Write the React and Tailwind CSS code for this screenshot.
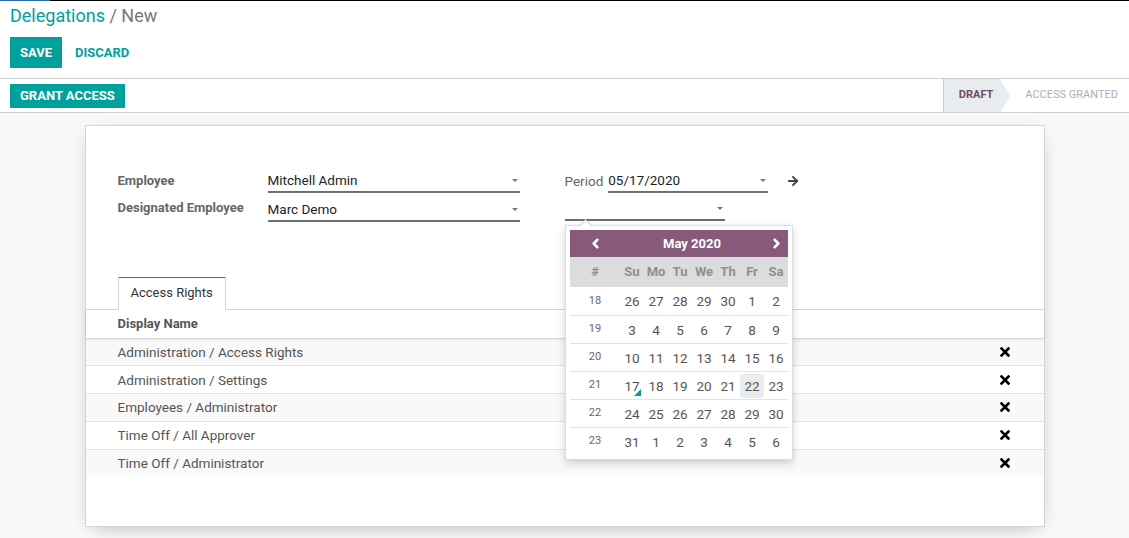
import { ArrowRight, ChevronLeft, ChevronRight } from 'lucide-react'

const font = { fontFamily: 'Roboto, "Noto Sans", sans-serif' }

const rights = [
    'Administration / Access Rights',
    'Administration / Settings',
    'Employees / Administrator',
    'Time Off / All Approver',
    'Time Off / Administrator',
]

const weeks = [
    [18, [26, 27, 28, 29, 30, 1, 2]],
    [19, [3, 4, 5, 6, 7, 8, 9]],
    [20, [10, 11, 12, 13, 14, 15, 16]],
    [21, [17, 18, 19, 20, 21, 22, 23]],
    [22, [24, 25, 26, 27, 28, 29, 30]],
    [23, [31, 1, 2, 3, 4, 5, 6]],
]

const Caret = () => (
    <div className="w-0 h-0 border-l-[3px] border-r-[3px] border-t-[3px] border-l-transparent border-r-transparent border-t-[#777]" />
)

const Field = ({ value, className }) => (
    <div className={"flex items-center justify-between h-[23px] border-b-2 border-[#6f6f6f] pr-[2px] text-[13.5px] text-[#212529] " + className}>
        <span>{value}</span>
        <Caret />
    </div>
)

const Times = () => (
    <svg width="10" height="10" viewBox="0 0 10 10">
        <path d="M1.5 1.5 L8.5 8.5 M8.5 1.5 L1.5 8.5" stroke="#000" strokeWidth="2.6" strokeLinecap="square" />
    </svg>
)

const Calendar = () => (
    <div className="absolute left-[565px] top-[225px] w-[228px] bg-white border border-[#dcdcdc] shadow-[0_3px_8px_rgba(0,0,0,0.18)] p-[4px]">
        <div className="absolute -top-[5px] left-[15px] w-[9px] h-[9px] rotate-45 bg-white border-l border-t border-[#ccc]" />
        <div className="relative grid grid-cols-[50px_repeat(7,1fr)] items-center h-[27px] bg-[#875a7b] text-white">
            <div className="flex justify-center"><ChevronLeft size={15} strokeWidth={4} /></div>
            <span className="col-span-6 text-center font-bold text-[13px]">May 2020</span>
            <div className="flex justify-center"><ChevronRight size={15} strokeWidth={4} /></div>
        </div>
        <div className="grid grid-cols-[50px_repeat(7,1fr)] h-[30px] items-center bg-[#dcdcdc] text-[#8f8f8f] font-bold text-[13px] text-center">
            <span>#</span>
            {['Su', 'Mo', 'Tu', 'We', 'Th', 'Fr', 'Sa'].map(d => <span key={d}>{d}</span>)}
        </div>
        {weeks.map(([w, days], i) => (
            <div key={w} className={"grid grid-cols-[50px_repeat(7,1fr)] h-[28px] items-center text-center " + (i > 0 ? 'border-t border-[#e2e2e2]' : '')}>
                <span className="text-[11px] text-[#666]">{w}</span>
                {days.map((d, j) => {
                    const today = w === 21 && j === 0
                    const active = w === 21 && j === 5
                    return (
                        <span key={j} className={"relative text-[13.5px] text-[#555] leading-[24px] " + (active ? 'bg-[#e9ecef] rounded-sm' : '')}>
                            {d}
                            {today && <span className="absolute right-[3px] bottom-[2px] w-0 h-0 border-l-[7px] border-l-transparent border-b-[7px] border-b-[#00a09d]" />}
                        </span>
                    )
                })}
            </div>
        ))}
    </div>
)

export default function App() {
    return (
        <div className="relative min-h-[538px] bg-[#f9f9f9] text-[13px]" style={font}>
            <div className="bg-white">
                <div className="flex h-px bg-black">
                    <div className="w-[50px] bg-[#2a6fb5]" />
                </div>
                <div className="px-[10px] pt-[4px] border-b border-[#cfcfcf]">
                    <div className="text-[18px] leading-[22px]">
                        <span className="text-[#00a09d]">Delegations</span>
                        <span className="text-[#777]"> / New</span>
                    </div>
                    <div className="flex items-center gap-[13px] mt-[10px] pb-[10px]">
                        <button className="h-[31px] px-[10px] bg-[#00a09d] text-white font-bold text-[13px]">SAVE</button>
                        <button className="font-bold text-[13px] text-[#00a09d]">DISCARD</button>
                    </div>
                </div>
                <div className="flex items-center justify-between h-[34px] border-b border-[#cfcfcf] pl-[10px]">
                    <button className="h-[24px] px-[10px] bg-[#00a09d] text-white font-bold text-[13px]">GRANT ACCESS</button>
                    <div className="flex h-full items-stretch text-[11px] uppercase">
                        <div className="relative flex items-center pl-[15px] pr-[7px] bg-[#e9ecef] border-l border-[#cfcfcf] font-bold text-[#6d4b65]">
                            DRAFT
                            <div className="absolute -right-[10px] top-0 w-0 h-0 border-t-[17px] border-b-[17px] border-l-[10px] border-t-transparent border-b-transparent border-l-[#e9ecef]" />
                        </div>
                        <div className="flex items-center pl-[25px] pr-[11px] text-[#aab0b6]">ACCESS GRANTED</div>
                    </div>
                </div>
            </div>

            <div className="mx-auto mt-[12px] w-[960px] h-[402px] bg-white border border-[#d4d4d4] shadow-[0_5px_20px_-8px_rgba(0,0,0,0.35)] px-[32px] pt-[44px]">
                <div className="flex">
                    <div className="w-[447px] flex flex-col gap-[5px]">
                        <div className="flex items-end">
                            <div className="w-[150px] font-bold text-[#666] pb-[3px]">Employee</div>
                            <Field value="Mitchell Admin" className="w-[252px]" />
                        </div>
                        <div className="flex items-end">
                            <div className="w-[150px] font-bold text-[#666] pb-[4px]">Designated Employee</div>
                            <Field value="Marc Demo" className="w-[252px]" />
                        </div>
                    </div>
                    <div className="flex flex-col gap-[5px]">
                        <div className="flex items-end">
                            <span className="text-[#666] text-[13.5px] pb-[2px] pr-[5px]">Period</span>
                            <Field value="05/17/2020" className="w-[160px]" />
                            <ArrowRight size={14} strokeWidth={3.4} className="ml-[18px] mb-[5px] text-[#444]" />
                        </div>
                        <Field value="" className="w-[160px]" />
                    </div>
                </div>

                <div className="-mx-[32px] mt-[55px]">
                    <div className="flex border-b border-[#d4d4d4] pl-[32px]">
                        <div className="h-[33px] -mb-px px-[12px] flex items-center bg-white border border-[#d4d4d4] border-t-[#7c5a72] border-b-white text-[13px] text-[#333]">Access Rights</div>
                    </div>
                    <div className="h-[28px] flex items-center pl-[32px] font-bold text-[#555] shadow-[0_2px_4px_rgba(0,0,0,0.08)] relative">Display Name</div>
                    {rights.map((r, i) => (
                        <div key={r} className={"h-[27.8px] flex items-center justify-between pl-[32px] pr-[34px] text-[13.5px] text-[#555] border-t border-[#e2e2e2] " + (i % 2 === 0 ? 'bg-[#f9f9f9]' : 'bg-white')}>
                            <span>{r}</span>
                            <Times />
                        </div>
                    ))}
                </div>
            </div>

            <Calendar />
        </div>
    )
}
